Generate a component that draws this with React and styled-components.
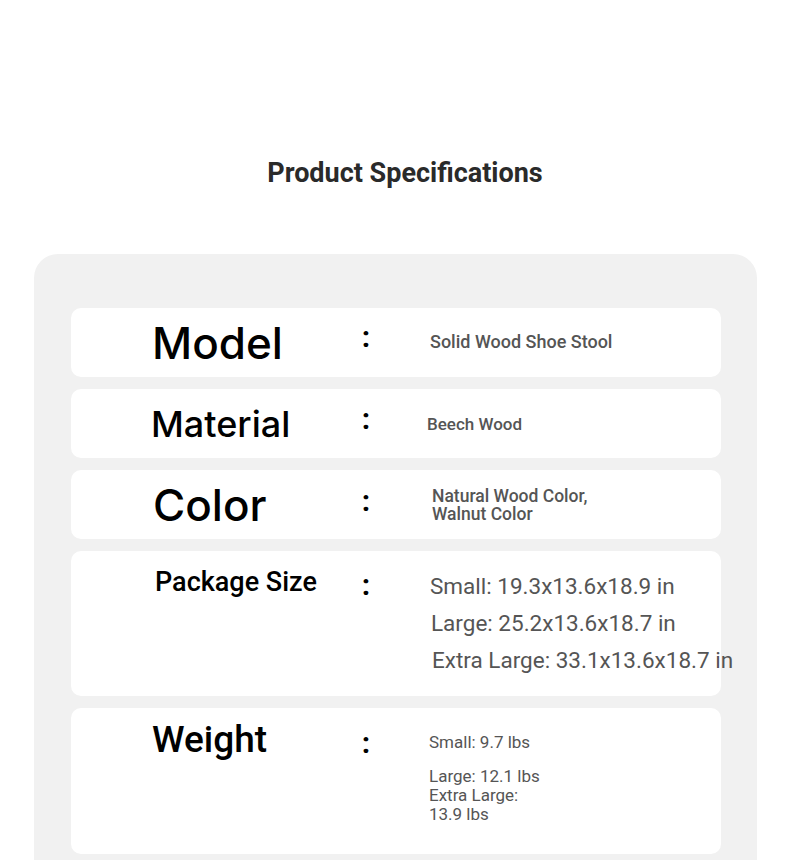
import React from "react";
import styled, { createGlobalStyle } from "styled-components";

const Global = createGlobalStyle`
  html, body { margin: 0; padding: 0; background: #ffffff; }
  body { font-family: Roboto, "Liberation Sans", sans-serif; overflow: hidden; }
`;

const Page = styled.div`
  width: 790px;
  height: 860px;
  overflow: hidden;
  display: flex;
  flex-direction: column;
  align-items: center;
`;

const Title = styled.h1`
  margin: 153px 0 0 20px;
  font-family: Roboto, "Liberation Sans", sans-serif;
  font-weight: 700;
  font-size: 27px;
  line-height: 40px;
  color: #2a2a2a;
`;

const Card = styled.div`
  margin-top: 61px;
  width: 723px;
  margin-left: 1px;
  flex: 1;
  box-sizing: border-box;
  background: #f1f1f1;
  border-radius: 24px 24px 0 0;
  padding: 54px 36px 0 37px;
  display: flex;
  flex-direction: column;
  gap: 12px;
`;

const Row = styled.div`
  height: ${(p) => p.$h}px;
  background: #ffffff;
  border-radius: 10px;
  display: grid;
  grid-template-columns: 81px 199px 30px 1fr;
  align-items: start;
  flex-shrink: 0;
`;

const Label = styled.div`
  grid-column: 2;
  margin-top: ${(p) => p.$top}px;
  margin-left: ${(p) => p.$dx || 0}px;
  font-family: ${(p) => (p.$roboto ? 'Roboto, "Liberation Sans", sans-serif' : 'Inter, "Liberation Sans", sans-serif')};
  font-weight: 500;
  font-size: ${(p) => p.$size}px;
  line-height: 1;
  color: #000000;
  white-space: nowrap;
`;

const Colon = styled.div`
  grid-column: 3;
  margin-top: ${(p) => p.$top}px;
  text-align: center;
  font-family: Roboto, "Liberation Sans", sans-serif;
  font-weight: 700;
  font-size: 30px;
  line-height: 30px;
  color: #000000;
`;

const Value = styled.div`
  grid-column: 4;
  margin-top: ${(p) => p.$top}px;
  margin-left: ${(p) => 49 + (p.$dx || 0)}px;
  font-family: Roboto, "Liberation Sans", sans-serif;
  font-weight: ${(p) => p.$w || 400};
  font-size: ${(p) => p.$size}px;
  line-height: ${(p) => p.$lh}px;
  color: #555555;
  white-space: nowrap;
`;

const Line = styled.div`
  margin-left: ${(p) => p.$dx || 0}px;
`;

const Gap = styled.div`
  height: ${(p) => p.$h}px;
`;

export default function App() {
  return (
    <>
      <Global />
      <Page>
        <Title>Product Specifications</Title>
        <Card>
          <Row $h={69}>
            <Label $top={13} $size={44}>Model</Label>
            <Colon $top={14}>:</Colon>
            <Value $top={24} $size={18} $lh={20} $w={500}>Solid Wood Shoe Stool</Value>
          </Row>
          <Row $h={69}>
            <Label $top={17} $size={36} $dx={-1}>Material</Label>
            <Colon $top={15}>:</Colon>
            <Value $top={25} $size={17} $lh={20} $dx={-3} $w={500}>Beech Wood</Value>
          </Row>
          <Row $h={69}>
            <Label $top={13} $size={44} $dx={1}>Color</Label>
            <Colon $top={16}>:</Colon>
            <Value $top={17} $size={17.5} $lh={18} $dx={2} $w={500}>
              <Line>Natural Wood Color,</Line>
              <Line>Walnut Color</Line>
            </Value>
          </Row>
          <Row $h={145}>
            <Label $top={18} $size={27} $roboto $dx={3}>Package Size</Label>
            <Colon $top={19}>:</Colon>
            <Value $top={17} $size={22.5} $lh={37}>
              <Line>Small: 19.3x13.6x18.9 in</Line>
              <Line $dx={1}>Large: 25.2x13.6x18.7 in</Line>
              <Line $dx={2}>Extra Large: 33.1x13.6x18.7 in</Line>
            </Value>
          </Row>
          <Row $h={146}>
            <Label $top={13} $size={37} $roboto>Weight</Label>
            <Colon $top={20}>:</Colon>
            <Value $top={25} $size={17} $lh={19} $dx={-1}>
              <Line>Small: 9.7 lbs</Line>
              <Gap $h={15} />
              <Line>Large: 12.1 lbs</Line>
              <Line>Extra Large:</Line>
              <Line>13.9 lbs</Line>
            </Value>
          </Row>
        </Card>
      </Page>
    </>
  );
}
